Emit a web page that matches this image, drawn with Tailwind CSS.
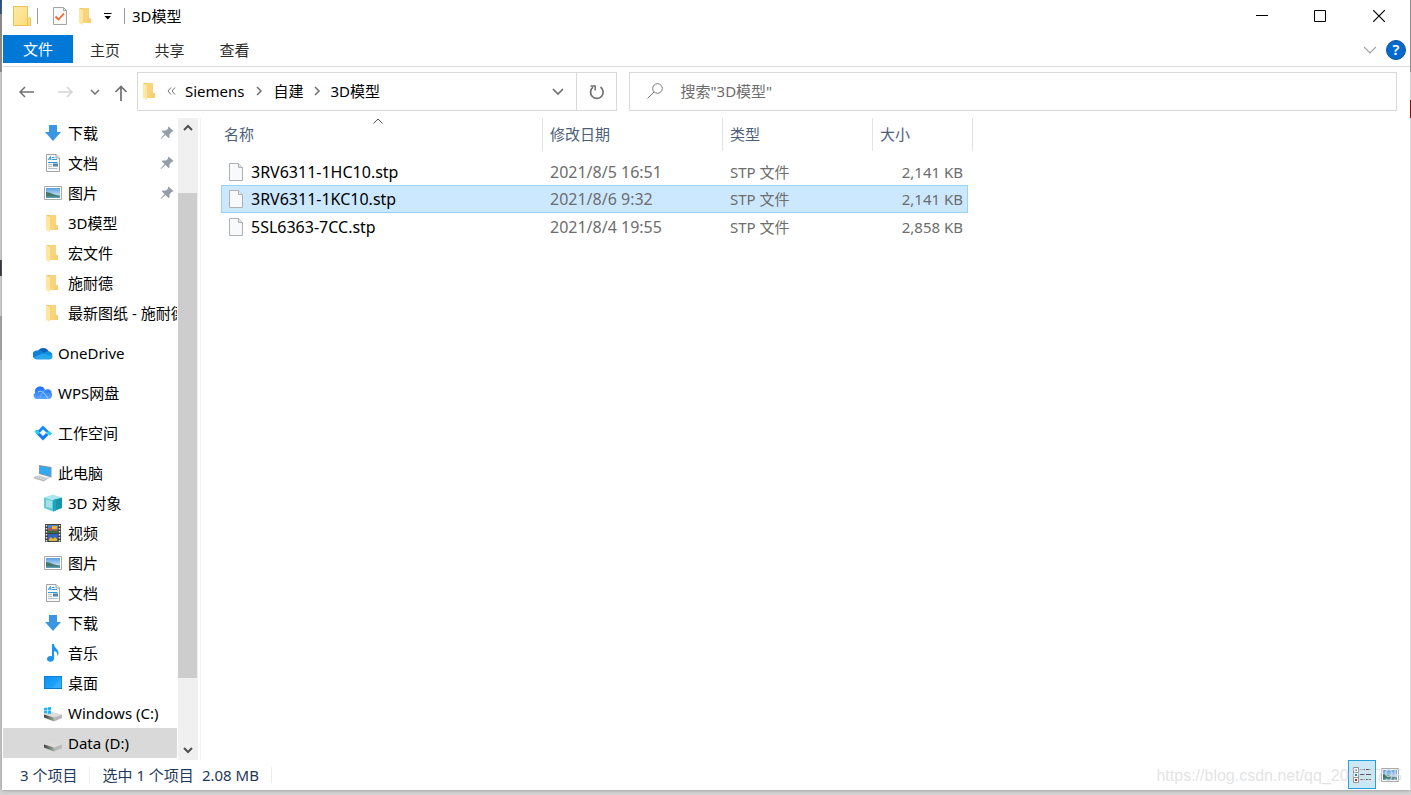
<!DOCTYPE html>
<html lang="zh-CN">
<head>
    <meta charset="UTF-8">
    <meta name="viewport" content="width=device-width, initial-scale=1.0">
    <title>3D模型</title>
    <script src="https://cdn.jsdelivr.net/npm/@tailwindcss/browser@4"></script>
    <style>
        body {
            font-family: 'Noto Sans', 'Noto Sans CJK SC', sans-serif;
        }
    </style>
</head>
<body class="h-screen overflow-hidden bg-[#d4d4d4] text-[15px] leading-5 text-black">

    <!-- Icon sprite -->
    <svg class="absolute size-0" xmlns="http://www.w3.org/2000/svg">
        <defs>
            <linearGradient id="g-folder" x1="0" y1="0" x2="1" y2="1"><stop offset="0" stop-color="#ffe9a6"/><stop offset="1" stop-color="#ffdb78"/></linearGradient>
            <linearGradient id="g-sky" x1="0" y1="0" x2="0" y2="1"><stop offset="0" stop-color="#5a9fe0"/><stop offset="1" stop-color="#e3f3fb"/></linearGradient>
            <linearGradient id="g-desk" x1="0" y1="0" x2="1" y2="1"><stop offset="0" stop-color="#0d8ff0"/><stop offset="1" stop-color="#2aaeff"/></linearGradient>
            <linearGradient id="g-wps" x1="0" y1="0" x2="0" y2="1"><stop offset="0" stop-color="#1b6df5"/><stop offset="1" stop-color="#58a6ff"/></linearGradient>
            <linearGradient id="g-disk" x1="0" y1="0" x2="1" y2="0"><stop offset="0" stop-color="#3f3f3f"/><stop offset="1" stop-color="#a5a5a5"/></linearGradient>
        </defs>
        <symbol id="i-folder" viewBox="0 0 14 18">
            <path d="M1 1H11V16H1Z" fill="#e9bf5d"/>
            <path d="M4 1H11V11H13V16H4Z" fill="#f5cf74"/>
            <path d="M1 1L5 3V18L1 16Z" fill="#ffe7a2"/>
            <path d="M5 3L4 1H11V11H9V16H5Z" fill="#f8d57c"/>
        </symbol>
        <symbol id="i-down" viewBox="0 0 18 18"><path d="M5 1H13V8H17L9 17L1 8H5Z" fill="#3a96e3"/></symbol>
        <symbol id="i-doc" viewBox="0 0 18 18">
            <path d="M2.500 .5H12L15.500 4V17.500H2.500Z" fill="#fafafa" stroke="#a3a3a3"/>
            <path d="M12 .5V4H15.500" fill="#e6e6e6" stroke="#a3a3a3"/>
            <path d="M4 6L6.500 2.500L7 6M5 5H7M8 3.500H10.500M8 5.500H13M4 8.500H13.500" fill="none" stroke="#2c9bd6"/>
            <path d="M4 10.500H8M4 12.500H8M4 14.500H13.500" stroke="#b3bfc8"/>
            <path d="M9 9.500H14V12.500H9Z" fill="#4f84b3"/>
        </symbol>
        <symbol id="i-pic" viewBox="0 0 18 18">
            <path d="M.5 2.500H17.500V15.500H.5Z" fill="#fff" stroke="#aaa"/>
            <path d="M2 4H16V14H2Z" fill="url(#g-sky)"/>
            <path d="M2 8C6 8 9 11 16 11.500V14H2Z" fill="#47796a"/>
            <path d="M2 12.500H16V14H2Z" fill="#5a9bb8"/>
        </symbol>
        <symbol id="i-onedrive" viewBox="0 0 20 14">
            <path d="M5 5A6 6 0 0 1 15.500 5L17 9L6 9Z" fill="#0863b8"/>
            <path d="M4.500 4.500C7 3.500 9 5 11 7L3 13A4.300 4.300 0 0 1 4.500 4.500Z" fill="#1180d8"/>
            <path d="M11 7C14 4 19 5 19.500 9L16 13H9Z" fill="#1490df"/>
            <path d="M1 11L10 7.500C14 9 17 10 19.500 9.500C20 12 18.500 13.500 16 13.500H5C3 13.500 1.500 13 1 11Z" fill="#28a8ea"/>
        </symbol>
        <symbol id="i-wps" viewBox="0 0 20 14">
            <path d="M2 7C1 2 5 0 8 .5C11 1 11.500 3 12 4C16 2 19 4.500 18.500 7C20 9 18.500 13 16 13H4C0 13 0 8 2 7Z" fill="url(#g-wps)"/>
            <path d="M5 6C8 4 11 6 15 12.500" fill="none" stroke="#c2e2ff" stroke-width=".8"/>
            <path d="M7 12.500C7.500 9 9.500 6 12 4" fill="none" stroke="#82bcff" stroke-width=".7"/>
        </symbol>
        <symbol id="i-space" viewBox="0 0 18 16">
            <path d="M1 6L3 5L9 11L12 8L14.500 10L9 15.500L2.500 9Z" fill="#177df2"/>
            <path d="M3.500 6L9 .5L15.500 7L17.500 8.500L16 10.500L9 4.500L6 7.500Z" fill="#1587f8"/>
            <path d="M.5 6.500L3 5L6 8L3.500 9.500ZM12.500 7.500L15 6L18 8.500L15.500 10.500Z" fill="#22d4ef"/>
        </symbol>
        <symbol id="i-pc" viewBox="0 0 20 18">
            <path d="M6 1L18.500 3V13.500L6 10Z" fill="#8195a5"/>
            <path d="M7 2.200L17.500 4V12L7 9.200Z" fill="#31a8f2"/>
            <path d="M1 13L6 11.500L15 14.500L11 17.500L1 14.500Z" fill="#b6babe"/>
            <path d="M3 13.200L12 16M5 12.500L13 15" stroke="#eef0f1" stroke-width=".8" stroke-dasharray="1.500 .7"/>
            <path d="M13 12.200L17 13.300L15 15Z" fill="#d4dade"/>
        </symbol>
        <symbol id="i-cube" viewBox="0 0 18 18">
            <path d="M0 3.500L9 .5L18 3.500L10 6Z" fill="#a9e7ee"/>
            <path d="M0 3.500L9 6V17.500L0 14Z" fill="#63cbd6"/>
            <path d="M2 5.500L8 7V14L2 13Z" fill="#a3e1e8"/>
            <path d="M9 6L18 3.500V14L9 17.500Z" fill="#1494ad"/>
            <path d="M9 6L12 5.200V16.300L9 17.500Z" fill="#1da5bf"/>
        </symbol>
        <symbol id="i-video" viewBox="0 0 18 18">
            <path d="M1 0H17V18H1Z" fill="#404040"/>
            <path d="M4 1H14V9H4Z" fill="#4e83cc"/><path d="M4 10H14V17H4Z" fill="#3564bd"/>
            <path d="M4 6H14V9H4Z" fill="#317149"/><path d="M8 2H13V5H8Z" fill="#f0b429"/><path d="M5 4H8V7H5Z" fill="#d04b36"/><path d="M10 5H13V7H10Z" fill="#d04b36"/>
            <path d="M5 15L7 13L9 15L11 13L13 15V17H5Z" fill="#e5b635"/>
            <path d="M2.500 1V18M15.500 1V18" stroke="#e6e6e6" stroke-width="1.500" stroke-dasharray="1.500 1.500"/>
        </symbol>
        <symbol id="i-music" viewBox="0 0 18 18">
            <path d="M8 0H10C10 4 15 5 14.500 10L13 12.500C14 9 12.500 7.500 10 7V14.500C10 19 3 18.500 3 15C3 12 6 11.500 8 12.200Z" fill="#1a94ef"/>
        </symbol>
        <symbol id="i-desk" viewBox="0 0 18 18"><path d="M0 2H18V15H0Z" fill="#0a78cf"/><path d="M.7 2.700H17.300V14H.7Z" fill="url(#g-desk)"/><path d="M8 14L17.300 4V14Z" fill="#41b5ff" opacity=".5"/></symbol>
        <symbol id="i-disk" viewBox="0 0 18 18">
            <path d="M0 10.500L8 8L18 10.500L10 13.500Z" fill="#dcdcdc"/>
            <path d="M0 10.500L10 13.500V17.500L0 13.500Z" fill="url(#g-disk)"/>
            <path d="M10 13.500L18 10.500V14L10 17.500Z" fill="#b7b7b7"/>
            <path d="M6 14.500L8 15.200V16.200L6 15.400Z" fill="#39b54a"/>
        </symbol>
        <symbol id="i-winlogo" viewBox="0 0 8 8"><path d="M0 1L3.500 .5V3.700H0ZM4.200 .4L8 0V3.700H4.200ZM0 4.300H3.500V7.500L0 7ZM4.200 4.300H8V8L4.200 7.600Z" fill="#1fb6f0"/></symbol>
        <symbol id="i-pin" viewBox="0 0 14 14">
            <path d="M8.500 .5L13.500 5L12 6L11.500 6L9.500 8.500L9.500 11.500L8.500 12L5.500 9L1 13L.5 12.800L4.500 8L2 5.500L2.500 4.500L6 4.500L8.200 2.500L8 1.500Z" fill="#939ea8"/>
        </symbol>
        <symbol id="i-file" viewBox="0 0 14 18">
            <path d="M.5 .5H9.500L13.500 4.500V17.500H.5Z" fill="#f8f9fa" stroke="#aeb0b2"/>
            <path d="M9.500 .5V4.500H13.500" fill="#e2e4e6" stroke="#aeb0b2"/>
        </symbol>
    </svg>

    <div class="flex h-full pb-[5px]">
        <!-- Sliver of the windows behind -->
        <div class="flex w-[2px] shrink-0 flex-col">
            <div class="h-[14px] bg-[#124377]"></div>
            <div class="h-[58px] bg-[#8b8b8b]"></div>
            <div class="h-[188px] bg-[#dadada]"></div>
            <div class="h-4 bg-[#20242c]"></div>
            <div class="h-10 bg-[#dedede]"></div>
            <div class="h-11 bg-[#a9a9a9]"></div>
            <div class="grow bg-[#d0d0d0]"></div>
        </div>

        <main class="flex min-w-0 grow flex-col bg-white pl-px shadow-[0_0_4px_#888]">
            <!-- Title bar -->
            <header class="flex h-[35px] shrink-0 items-center pb-[3px]">
                <svg class="ml-[10px] h-5 w-[18px]" viewBox="0 0 18 20">
                    <path d="M.5 .5H14.500V12H17.500V19.500H.5Z" fill="url(#g-folder)" stroke="#e8c258"/>
                    <path d="M14.500 13V19" stroke="#e8c258"/>
                </svg>
                <div class="ml-[6px] h-4 w-px bg-[#9a9a9a]"></div>
                <button class="ml-[15px]" aria-label="属性">
                    <svg class="h-[18px] w-[14px]" viewBox="0 0 14 18">
                        <path d="M.5 .5H10.500L13.500 3.500V17.500H.5Z" fill="#f8f9fa" stroke="#a2a4a6"/><path d="M10.500 .5V3.500H13.500" fill="none" stroke="#a2a4a6"/>
                        <path d="M2.500 9.500L5.500 12.500L11 6.500" fill="none" stroke="#f2662b" stroke-width="1.800"/>
                    </svg>
                </button>
                <button class="ml-[11px]" aria-label="新建文件夹"><svg class="h-[18px] w-[14px]"><use href="#i-folder"/></svg></button>
                <button class="ml-3" aria-label="自定义快速访问工具栏">
                    <svg class="h-2 w-2" viewBox="0 0 8 8"><path d="M0 1.500H7.500" stroke="#000"/><path d="M.5 4H7L3.800 7.500Z"/></svg>
                </button>
                <div class="ml-3 h-4 w-px bg-[#9a9a9a]"></div>
                <h1 class="ml-[7px]">3D模型</h1>
                <div class="mr-[2px] ml-auto flex h-8 self-start">
                    <button class="grid w-[59px] place-items-center" aria-label="最小化"><svg class="size-3" viewBox="0 0 12 12"><path d="M0 5.500H12" stroke="#000"/></svg></button>
                    <button class="grid w-[58px] place-items-center" aria-label="最大化"><svg class="size-3" viewBox="0 0 12 12"><path d="M.5 .5H11.500V11.500H.5Z" fill="none" stroke="#000"/></svg></button>
                    <button class="grid w-[59px] place-items-center" aria-label="关闭"><svg class="size-3" viewBox="0 0 12 12"><path d="M0 0L12 12M12 0L0 12" stroke="#000" stroke-width="1.200"/></svg></button>
                </div>
            </header>

            <!-- Ribbon tabs -->
            <nav class="flex h-8 shrink-0 items-start border-b border-[#dcdcdc] text-[#2b2b2b]">
                <button class="h-7 w-[70px] bg-[#0078d7] text-white">文件</button>
                <button class="h-[30px] w-16">主页</button>
                <button class="h-[30px] w-[65px]">共享</button>
                <button class="h-[30px] w-[65px]">查看</button>
                <button class="ml-auto grid h-[30px] w-5 place-items-center" aria-label="展开功能区"><svg class="h-2 w-3" viewBox="0 0 12 8"><path d="M0 1L6 7L12 1" fill="none" stroke="#a0a0a0" stroke-width="1.200"/></svg></button>
                <button class="mt-[5px] mr-1 ml-[6px] flex size-5 items-center justify-center rounded-full border border-[#0a549b] bg-[#0569cb] pb-px text-[15px] leading-none font-semibold text-white" aria-label="帮助">?</button>
            </nav>

            <!-- Address bar -->
            <div class="flex shrink-0 items-center pt-[5px] pr-[13px]">
                <div class="flex w-[134px] shrink-0 items-center pl-4 text-[#707070]">
                    <button aria-label="后退"><svg class="h-4 w-4" viewBox="0 0 16 16"><path d="M15 8H1M6 3L1 8L6 13" fill="none" stroke="currentColor" stroke-width="1.500"/></svg></button>
                    <button class="ml-[22px] text-[#d5d5d5]" aria-label="前进"><svg class="h-4 w-4" viewBox="0 0 16 16"><path d="M1 8H15M10 3L15 8L10 13" fill="none" stroke="currentColor" stroke-width="1.500"/></svg></button>
                    <button class="ml-[17px]" aria-label="最近位置"><svg class="h-4 w-[10px]" viewBox="0 0 10 16"><path d="M1 6L5 10L9 6" fill="none" stroke="currentColor" stroke-width="1.500"/></svg></button>
                    <button class="ml-[13px] pt-[2px]" aria-label="向上"><svg class="h-4 w-4" viewBox="0 0 16 16"><path d="M8 16V1.500M2.500 7L8 1.500L13.500 7" fill="none" stroke="currentColor" stroke-width="1.700"/></svg></button>
                </div>
                <div class="flex h-[39px] flex-[5] items-center border border-[#d9d9d9] pb-px">
                    <svg class="ml-1 h-[18px] w-[14px]"><use href="#i-folder"/></svg>
                    <svg class="ml-[11px] h-[10px] w-[9px] shrink-0" viewBox="0 0 9 10"><path d="M4 1.500L1 5L4 8.500M8 1.500L5 5L8 8.500" fill="none" stroke="#707070"/></svg>
                    <a href="#" class="ml-[9px]">Siemens</a>
                    <svg class="mx-[11px] h-[10px] w-[7px] shrink-0" viewBox="0 0 7 10"><path d="M1 1L5 5L1 9" fill="none" stroke="#707070" stroke-width="1.500"/></svg>
                    <a href="#">自建</a>
                    <svg class="mx-[10px] h-[10px] w-[7px] shrink-0" viewBox="0 0 7 10"><path d="M1 1L5 5L1 9" fill="none" stroke="#707070" stroke-width="1.500"/></svg>
                    <a href="#">3D模型</a>
                    <button class="ml-auto grid h-full w-9 place-items-center" aria-label="以前的位置"><svg class="h-3 w-3" viewBox="0 0 12 12"><path d="M1 4L6 9L11 4" fill="none" stroke="#707070" stroke-width="1.700"/></svg></button>
                    <button class="-mb-px grid h-[37px] w-10 place-items-center border-l border-[#d9d9d9]" aria-label="刷新">
                        <svg class="size-4" viewBox="0 0 16 16"><path d="M11.500 3A6.300 6.300 0 1 1 4 3.200" fill="none" stroke="#707070" stroke-width="1.700"/><path d="M1.500 2H6.200V6.500" fill="none" stroke="#707070" stroke-width="1.500"/></svg>
                    </button>
                </div>
                <label class="ml-3 flex h-[39px] flex-[8] items-center border border-[#d9d9d9] pb-px">
                    <svg class="ml-[17px] size-4 shrink-0" viewBox="0 0 16 16"><circle cx="10.500" cy="5.500" r="4.800" fill="none" stroke="#7a7a7a"/><path d="M7 9L.5 15.500" stroke="#7a7a7a"/></svg>
                    <input type="text" aria-label="搜索" placeholder='搜索"3D模型"' class="ml-[17px] min-w-0 grow outline-none placeholder:text-[#6d6d6d]">
                </label>
            </div>

            <div class="flex min-h-0 grow pt-[7px]">
                <!-- Navigation pane -->
                <aside class="flex w-[198px] shrink-0 border-r border-[#f2f2f2]">
                    <div class="w-[174px] shrink-0 overflow-hidden whitespace-nowrap">
                        <ul class="mb-[10px]">
                            <li><a href="#" class="flex h-[30px] items-center gap-[6px] pr-[3px] pl-[41px]"><svg class="size-[18px] shrink-0"><use href="#i-down"/></svg>下载<svg class="ml-auto size-[14px]"><use href="#i-pin"/></svg></a></li>
                            <li><a href="#" class="flex h-[30px] items-center gap-[6px] pr-[3px] pl-[41px]"><svg class="size-[18px] shrink-0"><use href="#i-doc"/></svg>文档<svg class="ml-auto size-[14px]"><use href="#i-pin"/></svg></a></li>
                            <li><a href="#" class="flex h-[30px] items-center gap-[6px] pr-[3px] pl-[41px]"><svg class="size-[18px] shrink-0"><use href="#i-pic"/></svg>图片<svg class="ml-auto size-[14px]"><use href="#i-pin"/></svg></a></li>
                            <li><a href="#" class="flex h-[30px] items-center gap-2 pl-[41px]"><svg class="h-[18px] w-4 shrink-0"><use href="#i-folder"/></svg>3D模型</a></li>
                            <li><a href="#" class="flex h-[30px] items-center gap-2 pl-[41px]"><svg class="h-[18px] w-4 shrink-0"><use href="#i-folder"/></svg>宏文件</a></li>
                            <li><a href="#" class="flex h-[30px] items-center gap-2 pl-[41px]"><svg class="h-[18px] w-4 shrink-0"><use href="#i-folder"/></svg>施耐德</a></li>
                            <li><a href="#" class="flex h-[30px] items-center gap-2 pl-[41px]"><svg class="h-[18px] w-4 shrink-0"><use href="#i-folder"/></svg>最新图纸 - 施耐德</a></li>
                        </ul>
                        <a href="#" class="mb-[10px] flex h-[30px] items-center gap-[5px] pl-[30px]"><svg class="h-[14px] w-5 shrink-0"><use href="#i-onedrive"/></svg>OneDrive</a>
                        <a href="#" class="mb-[10px] flex h-[30px] items-center gap-[5px] pl-[30px]"><svg class="h-[14px] w-5 shrink-0"><use href="#i-wps"/></svg>WPS网盘</a>
                        <a href="#" class="mb-[10px] flex h-[30px] items-center gap-[5px] pl-[30px]"><svg class="h-4 w-5 shrink-0"><use href="#i-space"/></svg>工作空间</a>
                        <a href="#" class="flex h-[30px] items-center gap-[5px] pl-[30px]"><svg class="h-[18px] w-5 shrink-0"><use href="#i-pc"/></svg>此电脑</a>
                        <ul>
                            <li><a href="#" class="flex h-[30px] items-center gap-[6px] pl-[41px]"><svg class="size-[18px] shrink-0"><use href="#i-cube"/></svg>3D 对象</a></li>
                            <li><a href="#" class="flex h-[30px] items-center gap-[6px] pl-[41px]"><svg class="size-[18px] shrink-0"><use href="#i-video"/></svg>视频</a></li>
                            <li><a href="#" class="flex h-[30px] items-center gap-[6px] pl-[41px]"><svg class="size-[18px] shrink-0"><use href="#i-pic"/></svg>图片</a></li>
                            <li><a href="#" class="flex h-[30px] items-center gap-[6px] pl-[41px]"><svg class="size-[18px] shrink-0"><use href="#i-doc"/></svg>文档</a></li>
                            <li><a href="#" class="flex h-[30px] items-center gap-[6px] pl-[41px]"><svg class="size-[18px] shrink-0"><use href="#i-down"/></svg>下载</a></li>
                            <li><a href="#" class="flex h-[30px] items-center gap-[6px] pl-[41px]"><svg class="size-[18px] shrink-0"><use href="#i-music"/></svg>音乐</a></li>
                            <li><a href="#" class="flex h-[30px] items-center gap-[6px] pl-[41px]"><svg class="size-[18px] shrink-0"><use href="#i-desk"/></svg>桌面</a></li>
                            <li><a href="#" class="flex h-[30px] items-center gap-[6px] pl-[41px]"><svg class="size-[18px] shrink-0" viewBox="0 0 18 18"><use href="#i-disk" width="18" height="18"/><use href="#i-winlogo" y="3" width="7" height="7"/></svg>Windows (C:)</a></li>
                            <li><a href="#" class="flex h-[30px] items-center gap-[6px] bg-[#d9d9d9] pl-[41px]"><svg class="size-[18px] shrink-0"><use href="#i-disk"/></svg>Data (D:)</a></li>
                        </ul>
                    </div>
                    <div class="ml-px flex w-5 flex-col bg-[#f0f0f0]">
                        <button class="grid h-5 w-[19px] place-items-center" aria-label="向上滚动"><svg class="h-2 w-[10px]" viewBox="0 0 10 8"><path d="M1 6L5 2L9 6" fill="none" stroke="#505050" stroke-width="2"/></svg></button>
                        <div class="flex grow flex-col">
                            <div class="grow-[55]"></div>
                            <div class="mr-px grow-[485] bg-[#cdcdcd]"></div>
                            <div class="grow-[62]"></div>
                        </div>
                        <button class="grid h-5 w-[19px] place-items-center" aria-label="向下滚动"><svg class="h-2 w-[10px]" viewBox="0 0 10 8"><path d="M1 2L5 6L9 2" fill="none" stroke="#505050" stroke-width="2"/></svg></button>
                    </div>
                </aside>

                <!-- File list -->
                <section class="grow pl-5">
                    <table class="w-[752px] table-fixed border-separate border-spacing-0">
                        <colgroup><col class="w-[322px]"><col class="w-[180px]"><col class="w-[150px]"><col class="w-[95px]"><col></colgroup>
                        <thead class="text-left text-[#4c607a]">
                            <tr class="h-[33px]">
                                <th scope="col" class="relative border-r border-[#e3e3e3] pb-[2px] pl-[3px] font-normal">名称
                                    <svg class="absolute top-0 left-[49%] h-[6px] w-[10px] -translate-x-1/2" viewBox="0 0 10 6"><path d="M.5 5.500L5 1L9.500 5.500" fill="none" stroke="#555"/></svg>
                                </th>
                                <th scope="col" class="border-r border-[#e3e3e3] pb-[2px] pl-[7px] font-normal">修改日期</th>
                                <th scope="col" class="border-r border-[#e3e3e3] pb-[2px] pl-[7px] font-normal">类型</th>
                                <th scope="col" colspan="2" class="border-r border-[#e3e3e3] pb-[2px] pl-[7px] font-normal">大小</th>
                            </tr>
                            <tr class="h-[7px]" aria-hidden="true"><td colspan="5"></td></tr>
                        </thead>
                        <tbody class="text-[#6d6d6d]">
                            <tr class="h-[27px]">
                                <td class="pl-2 text-[16px] text-black"><div class="flex items-center gap-2"><svg class="h-[18px] w-[14px]"><use href="#i-file"/></svg>3RV6311-1HC10.stp</div></td>
                                <td class="pl-[7px] text-[16px]">2021/8/5 16:51</td>
                                <td class="pl-[7px]">STP 文件</td>
                                <td class="pr-[5px] text-right">2,141 KB</td>
                            </tr>
                            <tr class="h-7">
                                <td class="border-y border-l border-[#99d1ff] bg-[#cce8ff] pl-[7px] text-[16px] text-black"><div class="flex items-center gap-2"><svg class="h-[18px] w-[14px]"><use href="#i-file"/></svg>3RV6311-1KC10.stp</div></td>
                                <td class="border-y border-[#99d1ff] bg-[#cce8ff] pl-[7px] text-[16px]">2021/8/6 9:32</td>
                                <td class="border-y border-[#99d1ff] bg-[#cce8ff] pl-[7px]">STP 文件</td>
                                <td class="border-y border-r border-[#99d1ff] bg-[#cce8ff] pr-1 text-right">2,141 KB</td>
                            </tr>
                            <tr class="h-[27px]">
                                <td class="pl-2 text-[16px] text-black"><div class="flex items-center gap-2"><svg class="h-[18px] w-[14px]"><use href="#i-file"/></svg>5SL6363-7CC.stp</div></td>
                                <td class="pl-[7px] text-[16px]">2021/8/4 19:55</td>
                                <td class="pl-[7px]">STP 文件</td>
                                <td class="pr-[5px] text-right">2,858 KB</td>
                            </tr>
                        </tbody>
                    </table>
                </section>
            </div>

            <!-- Status bar -->
            <footer class="relative flex h-[30px] shrink-0 items-center pr-[11px] pb-px pl-[17px] text-[#1e395b]">
                <span>3 个项目</span>
                <span class="mx-3 h-4 w-px bg-[#ededed]"></span>
                <span>选中 1 个项目</span>
                <span class="ml-2">2.08 MB</span>
                <span class="ml-3 h-4 w-px bg-[#ededed]"></span>
                <button class="ml-auto grid h-[29px] w-7 place-items-center border border-[#26a0da] bg-[#cbe8f6]" aria-label="详细信息">
                    <svg class="h-4 w-[18px]" viewBox="0 0 18 16">
                        <path d="M.5 .5H5.500V15.500H.5ZM.5 5.500H5.500M.5 10.500H5.500" fill="#fff" stroke="#929292"/>
                        <path d="M2 2H4V4H2ZM2 7H4V9H2Z" fill="#3b78b8"/><path d="M2 12H4V14H2Z" fill="#c1272d"/>
                        <path d="M7 2.500H18M7 7.500H18M7 12.500H18" stroke="#555" stroke-dasharray="5 1"/>
                    </svg>
                </button>
                <button class="ml-[5px]" aria-label="大缩略图"><svg class="h-[18px] w-[18px]"><use href="#i-pic"/></svg></button>
                <span class="pointer-events-none absolute right-2 bottom-1 font-['Liberation_Sans'] text-[16px] text-[#dcdcdc]/80">https://blog.csdn.net/qq_20792795</span>
            </footer>
        </main>

        <!-- Right sliver -->
        <div class="flex w-px shrink-0 flex-col">
            <div class="h-[72px] bg-[#8b8b8b]"></div>
            <div class="h-7 bg-[#cfcfcf]"></div>
            <div class="h-[18px] bg-[#8c1010]"></div>
            <div class="grow bg-[#dadada]"></div>
        </div>
    </div>
</body>
</html>
